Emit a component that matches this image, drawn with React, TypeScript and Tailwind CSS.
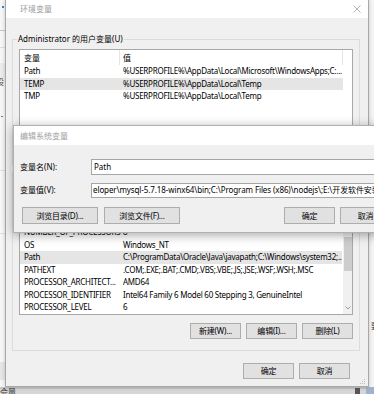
import React from "react";

const userVars: [string, string][] = [
  ["Path", "%USERPROFILE%\\AppData\\Local\\Microsoft\\WindowsApps;C:..."],
  ["TEMP", "%USERPROFILE%\\AppData\\Local\\Temp"],
  ["TMP", "%USERPROFILE%\\AppData\\Local\\Temp"],
];

const sysVars: [string, string][] = [
  ["ComSpec", "C:\\Windows\\system32\\cmd.exe"],
  ["JAVA_HOME", "C:\\Program Files\\Java\\jdk1.8.0_131"],
  ["NUMBER_OF_PROCESSORS", "8"],
  ["OS", "Windows_NT"],
  ["Path", "C:\\ProgramData\\Oracle\\Java\\javapath;C:\\Windows\\system32;..."],
  ["PATHEXT", ".COM;.EXE;.BAT;.CMD;.VBS;.VBE;.JS;.JSE;.WSF;.WSH;.MSC"],
  ["PROCESSOR_ARCHITECT...", "AMD64"],
  ["PROCESSOR_IDENTIFIER", "Intel64 Family 6 Model 60 Stepping 3, GenuineIntel"],
  ["PROCESSOR_LEVEL", "6"],
];

function Row({ name, value, selected }: { name: string; value: string; selected?: boolean }) {
  return (
    <div className="flex h-[12.5px] shrink-0">
      <div className={`flex items-center w-[323px] whitespace-nowrap overflow-hidden leading-[12px] tracking-[-0.25px] ${selected ? "bg-[#e5e5e5]" : ""}`}>
        <span className="w-[103px] shrink-0 pl-[4px] overflow-hidden">{name}</span>
        <span className="shrink-0">{value}</span>
      </div>
    </div>
  );
}

function Btn({ label, w, h = "h-[16px]" }: { label: string; w: string; h?: string }) {
  return (
    <div className={`${w} ${h} shrink-0 bg-[#e1e1e1] border border-[#adadad] flex items-center justify-center text-black whitespace-nowrap tracking-[-0.2px]`}>
      {label}
    </div>
  );
}

export default function App() {
  return (
    <div className="relative w-[374px] h-[394px] overflow-hidden bg-[#f2f2f2] text-[8px] leading-none text-black font-['Noto_Sans','Noto_Sans_CJK_SC',sans-serif]">
      {/* background desktop windows (partially visible) */}
      <div className="absolute left-0 top-0 w-[6px] h-[387px] bg-[#f7f7f7] border-r border-[#d0d0d0]">
        <div className="absolute left-[2px] top-[6px] w-[2px] h-[2px] bg-[#3b7fd4]" />
        <div className="absolute left-0 top-[30px] w-[6px] h-px bg-[#c8c8c8]" />
        <div className="absolute left-0 top-[47px] w-[6px] h-px bg-[#e0e0e0]" />
        <div className="absolute left-0 top-[63px] w-[6px] h-[20px] bg-[#ececec]" />
        <div className="absolute -left-[4px] top-[78px] text-[#555] whitespace-nowrap">设</div>
        <div className="absolute left-[1px] top-[116px] w-[2px] h-px bg-[#777]" />
        <div className="absolute left-0 top-[170px] w-[6px] h-px bg-[#e0e0e0]" />
        <div className="absolute left-0 top-[233px] w-[6px] h-px bg-[#e0e0e0]" />
        <div className="absolute left-0 top-[362px] w-[6px] h-[18px] bg-[#e6e6e6]" />
      </div>
      <div className="absolute left-0 top-[387px] w-[374px] h-[7px] bg-[#d6d6d6]">
        <div className="absolute left-0 top-0 w-[374px] h-[2px] bg-[#c4c4c4]" />
        <div className="absolute left-0 top-[1px] text-[#333] whitespace-nowrap">会量</div>
        <div className="absolute left-[355px] top-[1px] w-[5px] h-[6px] bg-[#555]" />
        <div className="absolute left-[366px] top-0 w-[8px] h-[7px] bg-[#9fb4cc]" />
      </div>
      <div className="absolute left-[369px] top-0 w-[5px] h-[387px] bg-[#f5f5f5]">
        <div className="absolute left-[2px] top-[322px] text-[#333] whitespace-nowrap">要</div>
      </div>

      {/* main dialog: 环境变量 */}
      <div className="absolute left-[5px] top-0 w-[364px] h-[387px] flex flex-col bg-[#f0f0f0] border-x border-b border-[#a8a8a8] shadow-[0_0_4px_rgba(0,0,0,0.2)]">
        <div className="h-[18px] shrink-0 bg-white flex items-center justify-between pl-[14px] pr-[7px]">
          <span className="text-[#9a9a9a]">环境变量</span>
          <svg width="8" height="8" viewBox="0 0 8 8" className="shrink-0">
            <path d="M0.5 0.5 L7.5 7.5 M7.5 0.5 L0.5 7.5" stroke="#a0a0a0" strokeWidth="0.8" />
          </svg>
        </div>

        {/* user variables group */}
        <div className="relative ml-[6px] mt-[21px] w-[348px] h-[126px] shrink-0 border border-[#dcdcdc] pt-[9px] px-[6px]">
          <span className="absolute left-[4px] -top-[5px] px-[1px] bg-[#f0f0f0] whitespace-nowrap">
            Administrator 的用户变量(U)
          </span>
          <div className="w-[334px] h-[105px] bg-white border border-[#a8a8a8] flex flex-col overflow-hidden">
            <div className="flex h-[15px] shrink-0">
              <div className="w-[100px] border-r border-[#e5e5e5] flex items-center pl-[4px]">变量</div>
              <div className="w-[223px] border-r border-[#e5e5e5] flex items-center pl-[3px]">值</div>
            </div>
            {userVars.map(([n, v], i) => (
              <Row key={n} name={n} value={v} selected={i === 1} />
            ))}
          </div>
        </div>

        {/* system variables group */}
        <div className="relative ml-[6px] mt-[7px] w-[348px] h-[179px] shrink-0 border border-[#dcdcdc] pt-[13px] px-[6px] flex flex-col">
          <span className="absolute left-[4px] -top-[5px] px-[1px] bg-[#f0f0f0] whitespace-nowrap">
            系统变量(S)
          </span>
          <div className="w-[334px] h-[129px] shrink-0 bg-white border border-[#a8a8a8] flex overflow-hidden">
            <div className="w-[323px] flex flex-col justify-end overflow-hidden pb-[0.5px]">
              {sysVars.map(([n, v]) => (
                <Row key={n} name={n} value={v} selected={n === "Path"} />
              ))}
            </div>
            <div className="w-[9px] ml-[1px] bg-[#f0f0f0] flex flex-col items-center">
              <div className="mt-[50px] w-[8px] h-[34px] bg-[#cdcdcd]" />
              <div className="flex-1" />
              <svg width="6" height="4" viewBox="0 0 6 4" className="mb-[4px]">
                <path d="M0.5 0.5 L3 3 L5.5 0.5" stroke="#8a8a8a" strokeWidth="0.8" fill="none" />
              </svg>
            </div>
          </div>
          <div className="mt-[8px] flex justify-end gap-[5px]">
            <Btn label="新建(W)..." w="w-[51px]" />
            <Btn label="编辑(I)..." w="w-[51px]" />
            <Btn label="删除(L)" w="w-[51px]" />
          </div>
        </div>

        <div className="mt-[12px] flex justify-end gap-[5px] pr-[18px]">
          <Btn label="确定" w="w-[51px]" />
          <Btn label="取消" w="w-[51px]" />
        </div>
        <div className="flex-1 flex justify-end items-end pr-[2px] pb-[2px]">
          <svg width="6" height="6" viewBox="0 0 6 6">
            <rect x="4" y="0" width="1" height="1" fill="#c0c0c0" />
            <rect x="2" y="2" width="1" height="1" fill="#c0c0c0" />
            <rect x="4" y="2" width="1" height="1" fill="#c0c0c0" />
            <rect x="0" y="4" width="1" height="1" fill="#c0c0c0" />
            <rect x="2" y="4" width="1" height="1" fill="#c0c0c0" />
            <rect x="4" y="4" width="1" height="1" fill="#c0c0c0" />
          </svg>
        </div>
      </div>

      {/* edit dialog: 编辑系统变量 */}
      <div className="absolute left-[13px] top-[125px] w-[400px] h-[108px] flex flex-col border border-[#b0b0b0] bg-[#f0f0f0] shadow-[0_2px_10px_rgba(0,0,0,0.35)]">
        <div className="h-[19px] shrink-0 bg-white flex items-center pl-[6px]">
          <span className="text-[#a0a0a0]">编辑系统变量</span>
        </div>
        <div className="flex flex-col pl-[6px] pt-[14px]">
          <div className="flex items-center h-[16px]">
            <span className="w-[71px] shrink-0 whitespace-nowrap">变量名(N):</span>
            <div className="w-[300px] h-[16px] bg-white border border-[#a5a5a5] flex items-center pl-[2px]">Path</div>
          </div>
          <div className="flex items-center h-[16px] mt-[7px]">
            <span className="w-[71px] shrink-0 whitespace-nowrap">变量值(V):</span>
            <div className="w-[300px] h-[15px] bg-white border border-[#a5a5a5] flex items-center pl-[1px] whitespace-nowrap overflow-hidden tracking-[-0.1px]">
              eloper\mysql-5.7.18-winx64\bin;C:\Program Files (x86)\nodejs\;E:\开发软件安装路径\
            </div>
          </div>
          <div className="flex mt-[9px] pl-[2px]">
            <Btn label="浏览目录(D)..." w="w-[76px]" h="h-[17px]" />
            <div className="ml-[6px]">
              <Btn label="浏览文件(F)..." w="w-[76px]" h="h-[17px]" />
            </div>
            <div className="ml-[104px]">
              <Btn label="确定" w="w-[51px]" h="h-[17px]" />
            </div>
            <div className="ml-[5px]">
              <Btn label="取消" w="w-[51px]" h="h-[17px]" />
            </div>
          </div>
        </div>
      </div>
    </div>
  );
}
